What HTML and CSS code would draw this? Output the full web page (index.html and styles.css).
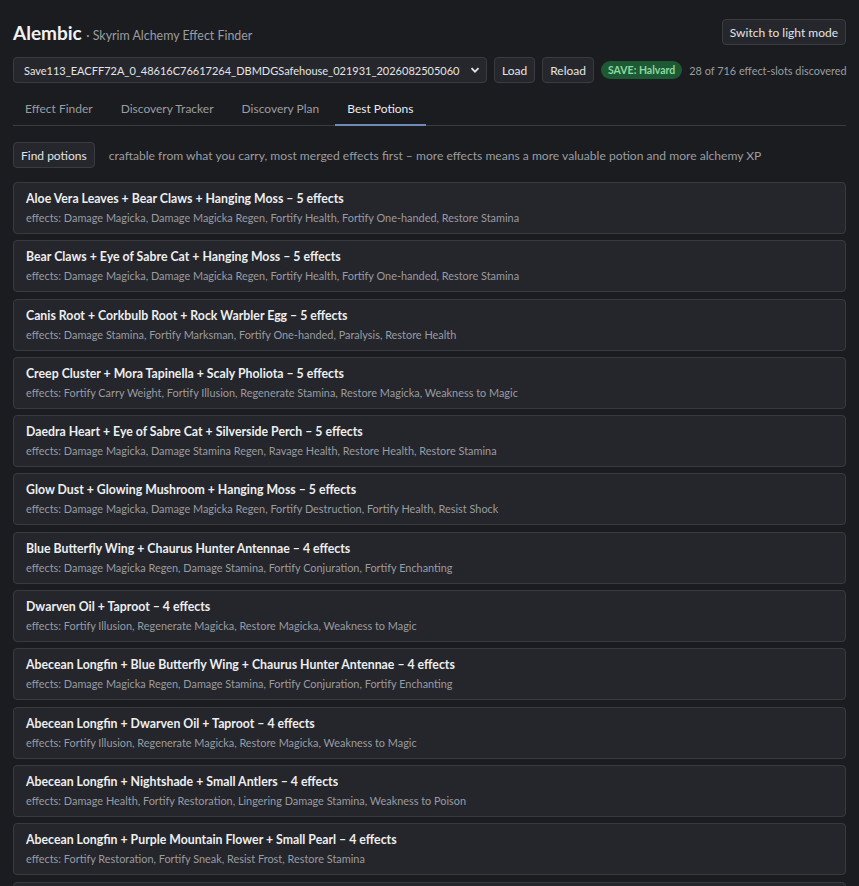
FILE: index.html
```html
<!DOCTYPE html>
<html lang="en">
<head>
    <meta charset="UTF-8">
    <meta name="viewport" content="width=device-width, initial-scale=1.0">
    <title>Alembic - Skyrim Alchemy Effect Finder</title>
    <link rel="stylesheet" href="styles.css">
</head>
<body>
    <div class="app">
        <header class="topbar">
            <h1 class="brand">Alembic <span class="tagline">· Skyrim Alchemy Effect Finder</span></h1>
            <button class="btn">Switch to light mode</button>
        </header>

        <div class="save-row">
            <div class="select-wrap">
                <select class="save-select">
                    <option>Save113_EACFF72A_0_48616C76617264_DBMDGSafehouse_021931_20260825050607_</option>
                </select>
                <svg class="chevron" width="10" height="10" viewBox="0 0 10 10"><path d="M1.5 3.2 5 6.7 8.5 3.2" fill="none" stroke="currentColor" stroke-width="1.8"/></svg>
            </div>
            <button class="btn">Load</button>
            <button class="btn">Reload</button>
            <span class="badge">SAVE: Halvard</span>
            <span class="stat">28 of 716 effect-slots discovered</span>
        </div>

        <nav class="tabs">
            <a class="tab">Effect Finder</a>
            <a class="tab">Discovery Tracker</a>
            <a class="tab">Discovery Plan</a>
            <a class="tab active">Best Potions</a>
        </nav>

        <div class="toolbar">
            <button class="btn">Find potions</button>
            <span class="hint">craftable from what you carry, most merged effects first – more effects means a more valuable potion and more alchemy XP</span>
        </div>

        <div class="results">
            <div class="potion">
                <div class="potion-name">Aloe Vera Leaves + Bear Claws + Hanging Moss – 5 effects</div>
                <div class="potion-effects">effects: Damage Magicka, Damage Magicka Regen, Fortify Health, Fortify One-handed, Restore Stamina</div>
            </div>
            <div class="potion">
                <div class="potion-name">Bear Claws + Eye of Sabre Cat + Hanging Moss – 5 effects</div>
                <div class="potion-effects">effects: Damage Magicka, Damage Magicka Regen, Fortify Health, Fortify One-handed, Restore Stamina</div>
            </div>
            <div class="potion">
                <div class="potion-name">Canis Root + Corkbulb Root + Rock Warbler Egg – 5 effects</div>
                <div class="potion-effects">effects: Damage Stamina, Fortify Marksman, Fortify One-handed, Paralysis, Restore Health</div>
            </div>
            <div class="potion">
                <div class="potion-name">Creep Cluster + Mora Tapinella + Scaly Pholiota – 5 effects</div>
                <div class="potion-effects">effects: Fortify Carry Weight, Fortify Illusion, Regenerate Stamina, Restore Magicka, Weakness to Magic</div>
            </div>
            <div class="potion">
                <div class="potion-name">Daedra Heart + Eye of Sabre Cat + Silverside Perch – 5 effects</div>
                <div class="potion-effects">effects: Damage Magicka, Damage Stamina Regen, Ravage Health, Restore Health, Restore Stamina</div>
            </div>
            <div class="potion">
                <div class="potion-name">Glow Dust + Glowing Mushroom + Hanging Moss – 5 effects</div>
                <div class="potion-effects">effects: Damage Magicka, Damage Magicka Regen, Fortify Destruction, Fortify Health, Resist Shock</div>
            </div>
            <div class="potion">
                <div class="potion-name">Blue Butterfly Wing + Chaurus Hunter Antennae – 4 effects</div>
                <div class="potion-effects">effects: Damage Magicka Regen, Damage Stamina, Fortify Conjuration, Fortify Enchanting</div>
            </div>
            <div class="potion">
                <div class="potion-name">Dwarven Oil + Taproot – 4 effects</div>
                <div class="potion-effects">effects: Fortify Illusion, Regenerate Magicka, Restore Magicka, Weakness to Magic</div>
            </div>
            <div class="potion">
                <div class="potion-name">Abecean Longfin + Blue Butterfly Wing + Chaurus Hunter Antennae – 4 effects</div>
                <div class="potion-effects">effects: Damage Magicka Regen, Damage Stamina, Fortify Conjuration, Fortify Enchanting</div>
            </div>
            <div class="potion">
                <div class="potion-name">Abecean Longfin + Dwarven Oil + Taproot – 4 effects</div>
                <div class="potion-effects">effects: Fortify Illusion, Regenerate Magicka, Restore Magicka, Weakness to Magic</div>
            </div>
            <div class="potion">
                <div class="potion-name">Abecean Longfin + Nightshade + Small Antlers – 4 effects</div>
                <div class="potion-effects">effects: Damage Health, Fortify Restoration, Lingering Damage Stamina, Weakness to Poison</div>
            </div>
            <div class="potion">
                <div class="potion-name">Abecean Longfin + Purple Mountain Flower + Small Pearl – 4 effects</div>
                <div class="potion-effects">effects: Fortify Restoration, Fortify Sneak, Resist Frost, Restore Stamina</div>
            </div>
            <div class="potion">
                <div class="potion-name">Abecean Longfin + Salmon Roe + Small Pearl – 4 effects</div>
                <div class="potion-effects">effects: Fortify Restoration, Fortify Sneak, Restore Stamina, Waterbreathing</div>
            </div>
        </div>
    </div>
</body>
</html>
```

FILE: styles.css
```css
body {
    margin: 0;
    background-color: #1b1c1f;
    color: #e3e4e6;
    font-family: Lato, "Open Sans", sans-serif;
    font-size: 12px;
}

.app {
    padding: 19px 13px 20px;
}

.topbar {
    display: flex;
    justify-content: space-between;
    align-items: center;
}

.brand {
    margin: 0;
    font-size: 19px;
    font-weight: 700;
    color: #f0f1f3;
}

.tagline {
    font-size: 12.4px;
    font-weight: 400;
    color: #9a9ca2;
}

.btn {
    flex-shrink: 0;
    font-family: inherit;
    font-size: 12px;
    color: #e3e4e6;
    background: #26272c;
    border: 1px solid #3a3b41;
    border-radius: 4px;
    height: 26px;
    padding: 0 7px;
    white-space: nowrap;
    cursor: pointer;
}

.btn:hover {
    background: #2e2f35;
}

.save-row {
    display: flex;
    align-items: center;
    gap: 7px;
    margin-top: 12px;
    white-space: nowrap;
}

.select-wrap {
    position: relative;
    flex-shrink: 0;
}

.save-select {
    appearance: none;
    width: 474px;
    height: 26px;
    padding: 0 26px 0 10px;
    font-family: inherit;
    font-size: 11px;
    color: #e3e4e6;
    background: #26272c;
    border: 1px solid #3a3b41;
    border-radius: 4px;
}

.chevron {
    position: absolute;
    right: 7px;
    top: 8px;
    color: #e3e4e6;
    pointer-events: none;
}

.badge {
    background: #1d5a34;
    color: #8ad9a0;
    font-size: 10.5px;
    font-weight: 700;
    padding: 3px 7px;
    border-radius: 10px;
}

.stat {
    color: #9a9ca2;
    font-size: 10.9px;
}

.tabs {
    display: flex;
    gap: 4px;
    margin-top: 10px;
    border-bottom: 1px solid #3a3b41;
}

.tab {
    padding: 8px 12px;
    color: #9a9ca2;
    cursor: pointer;
    border-bottom: 2px solid transparent;
    margin-bottom: -1px;
}

.tab.active {
    color: #e9ebee;
    border-bottom-color: #6e8bb8;
}

.toolbar {
    display: flex;
    align-items: center;
    gap: 14px;
    margin-top: 16px;
    white-space: nowrap;
}

.hint {
    color: #9a9ca2;
    font-size: 12.1px;
}

.results {
    display: flex;
    flex-direction: column;
    gap: 6.3px;
    margin-top: 14px;
}

.potion {
    background: #25262b;
    border: 1px solid #393a40;
    border-radius: 4px;
    padding: 7px 12px;
}

.potion-name {
    font-size: 12.3px;
    font-weight: 700;
    line-height: 18px;
    color: #eceef0;
}

.potion-effects {
    font-size: 10.9px;
    line-height: 16px;
    margin-top: 2px;
    color: #999ba1;
}
```
